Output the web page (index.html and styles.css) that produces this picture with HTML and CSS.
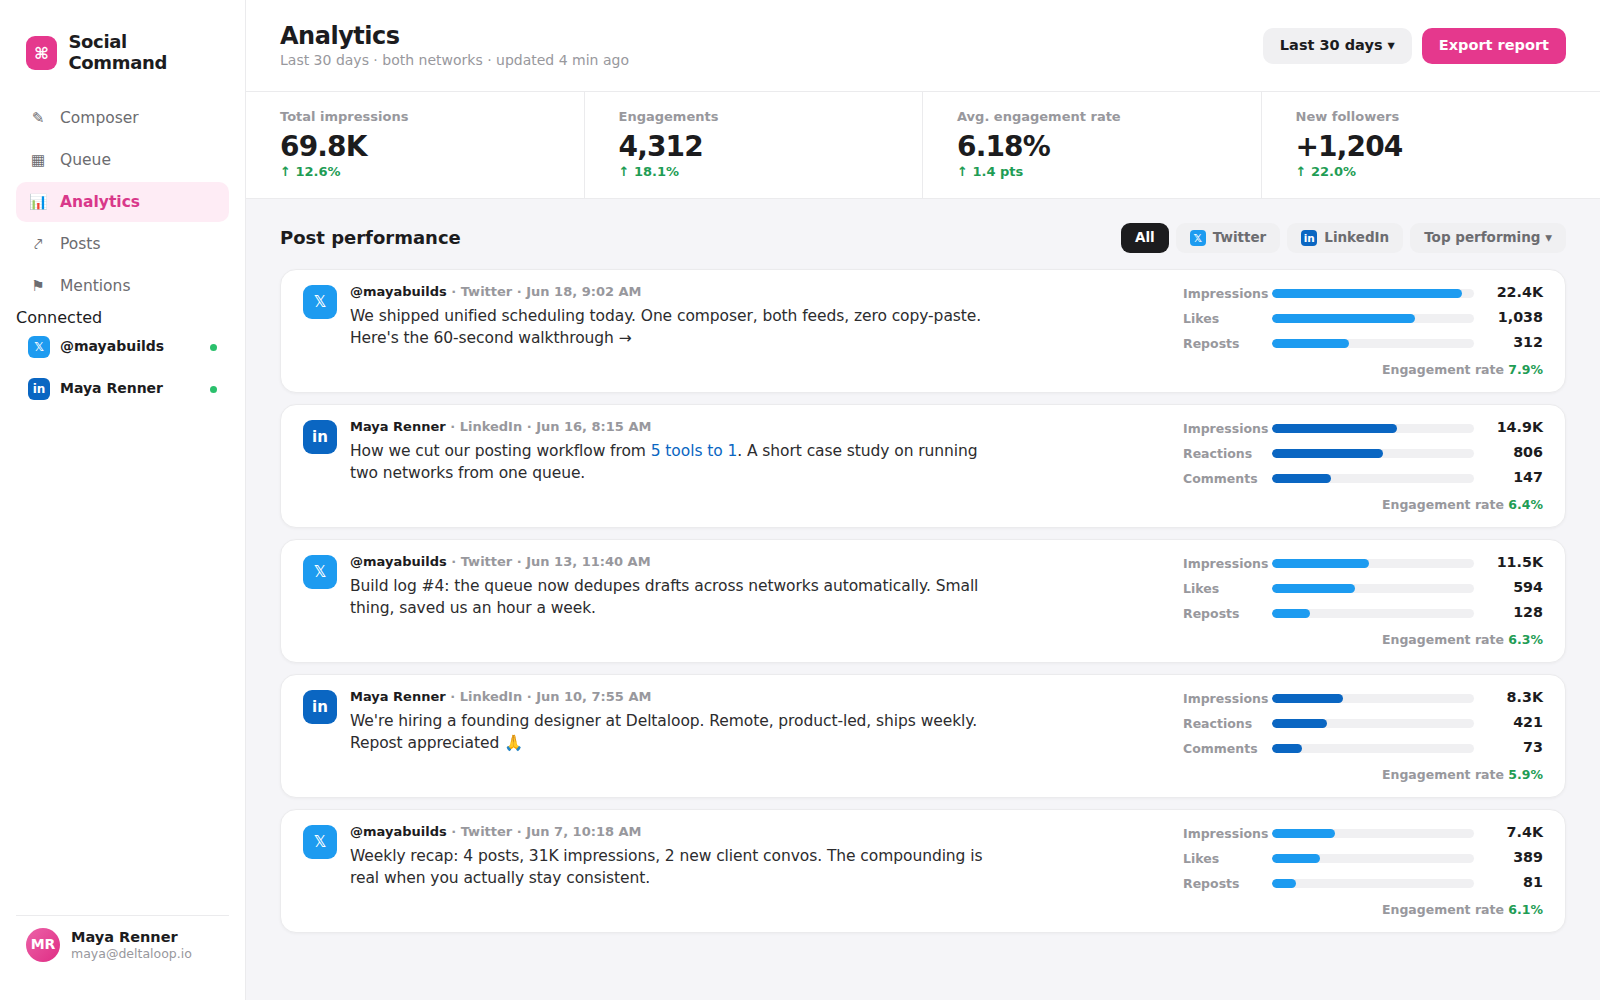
FILE: index.html
```html
<!DOCTYPE html>
<html lang="en">
<head>
<meta charset="utf-8">
<title>Social Command – Analytics</title>
<link rel="stylesheet" href="styles.css">
</head>
<body>
<div class="app">
  <aside class="sidebar">
    <div class="brand"><div class="brand-logo">⌘</div><div class="brand-name">Social Command</div></div>
    <nav class="nav">
      <a class="nav-item"><span class="nav-icon">✎</span>Composer</a>
      <a class="nav-item"><span class="nav-icon">▦</span>Queue</a>
      <a class="nav-item active"><span class="nav-icon">📊</span>Analytics</a>
      <a class="nav-item"><span class="nav-icon">⤤</span>Posts</a>
      <a class="nav-item"><span class="nav-icon">⚑</span>Mentions</a>
    </nav>
    <div class="connected">Connected</div>
    <div class="accounts">
      <div class="account"><span class="net tw">𝕏</span><span class="account-name">@mayabuilds</span><span class="dot"></span></div>
      <div class="account"><span class="net li">in</span><span class="account-name">Maya Renner</span><span class="dot"></span></div>
    </div>
    <div class="user">
      <div class="avatar">MR</div>
      <div><div class="user-name">Maya Renner</div><div class="user-mail">maya@deltaloop.io</div></div>
    </div>
  </aside>
  <main class="main">
    <header class="header">
      <div><h1>Analytics</h1><div class="sub">Last 30 days · both networks · updated 4 min ago</div></div>
      <div class="actions"><button class="btn">Last 30 days ▾</button><button class="btn primary">Export report</button></div>
    </header>
    <section class="kpis">
      <div class="kpi"><div class="kpi-label">Total impressions</div><div class="kpi-value">69.8K</div><div class="kpi-delta">↑ 12.6%</div></div>
      <div class="kpi"><div class="kpi-label">Engagements</div><div class="kpi-value">4,312</div><div class="kpi-delta">↑ 18.1%</div></div>
      <div class="kpi"><div class="kpi-label">Avg. engagement rate</div><div class="kpi-value">6.18%</div><div class="kpi-delta">↑ 1.4 pts</div></div>
      <div class="kpi"><div class="kpi-label">New followers</div><div class="kpi-value">+1,204</div><div class="kpi-delta">↑ 22.0%</div></div>
    </section>
    <section class="content">
      <div class="toolbar">
        <h2>Post performance</h2>
        <div class="chips">
          <button class="chip on"><span class="chip-label">All</span></button>
          <button class="chip"><span class="net tw">𝕏</span><span class="chip-label">Twitter</span></button>
          <button class="chip"><span class="net li">in</span><span class="chip-label">LinkedIn</span></button>
          <button class="chip"><span class="chip-label">Top performing ▾</span></button>
        </div>
      </div>
      <div class="posts">
        <article class="post">
          <span class="net tw">𝕏</span>
          <div class="body"><div class="meta"><b>@mayabuilds</b> · Twitter · Jun 18, 9:02 AM</div><p>We shipped unified scheduling today. One composer, both feeds, zero copy-paste. Here's the 60-second walkthrough →</p></div>
          <div class="stats tw-bars">
            <div class="stat"><span>Impressions</span><div class="track"><div class="fill" style="width:94%"></div></div><b>22.4K</b></div>
            <div class="stat"><span>Likes</span><div class="track"><div class="fill" style="width:71%"></div></div><b>1,038</b></div>
            <div class="stat"><span>Reposts</span><div class="track"><div class="fill" style="width:38%"></div></div><b>312</b></div>
            <div class="rate">Engagement rate <b>7.9%</b></div>
          </div>
        </article>
        <article class="post">
          <span class="net li">in</span>
          <div class="body"><div class="meta"><b>Maya Renner</b> · LinkedIn · Jun 16, 8:15 AM</div><p>How we cut our posting workflow from <a>5 tools to 1</a>. A short case study on running two networks from one queue.</p></div>
          <div class="stats li-bars">
            <div class="stat"><span>Impressions</span><div class="track"><div class="fill" style="width:62%"></div></div><b>14.9K</b></div>
            <div class="stat"><span>Reactions</span><div class="track"><div class="fill" style="width:55%"></div></div><b>806</b></div>
            <div class="stat"><span>Comments</span><div class="track"><div class="fill" style="width:29%"></div></div><b>147</b></div>
            <div class="rate">Engagement rate <b>6.4%</b></div>
          </div>
        </article>
        <article class="post">
          <span class="net tw">𝕏</span>
          <div class="body"><div class="meta"><b>@mayabuilds</b> · Twitter · Jun 13, 11:40 AM</div><p>Build log #4: the queue now dedupes drafts across networks automatically. Small thing, saved us an hour a week.</p></div>
          <div class="stats tw-bars">
            <div class="stat"><span>Impressions</span><div class="track"><div class="fill" style="width:48%"></div></div><b>11.5K</b></div>
            <div class="stat"><span>Likes</span><div class="track"><div class="fill" style="width:41%"></div></div><b>594</b></div>
            <div class="stat"><span>Reposts</span><div class="track"><div class="fill" style="width:19%"></div></div><b>128</b></div>
            <div class="rate">Engagement rate <b>6.3%</b></div>
          </div>
        </article>
        <article class="post">
          <span class="net li">in</span>
          <div class="body"><div class="meta"><b>Maya Renner</b> · LinkedIn · Jun 10, 7:55 AM</div><p>We're hiring a founding designer at Deltaloop. Remote, product-led, ships weekly. Repost appreciated 🙏</p></div>
          <div class="stats li-bars">
            <div class="stat"><span>Impressions</span><div class="track"><div class="fill" style="width:35%"></div></div><b>8.3K</b></div>
            <div class="stat"><span>Reactions</span><div class="track"><div class="fill" style="width:27%"></div></div><b>421</b></div>
            <div class="stat"><span>Comments</span><div class="track"><div class="fill" style="width:15%"></div></div><b>73</b></div>
            <div class="rate">Engagement rate <b>5.9%</b></div>
          </div>
        </article>
        <article class="post">
          <span class="net tw">𝕏</span>
          <div class="body"><div class="meta"><b>@mayabuilds</b> · Twitter · Jun 7, 10:18 AM</div><p>Weekly recap: 4 posts, 31K impressions, 2 new client convos. The compounding is real when you actually stay consistent.</p></div>
          <div class="stats tw-bars">
            <div class="stat"><span>Impressions</span><div class="track"><div class="fill" style="width:31%"></div></div><b>7.4K</b></div>
            <div class="stat"><span>Likes</span><div class="track"><div class="fill" style="width:24%"></div></div><b>389</b></div>
            <div class="stat"><span>Reposts</span><div class="track"><div class="fill" style="width:12%"></div></div><b>81</b></div>
            <div class="rate">Engagement rate <b>6.1%</b></div>
          </div>
        </article>
      </div>
    </section>
  </main>
</div>
</body>
</html>
```
FILE: styles.css
```css
* { box-sizing: border-box; }
body { margin: 0; font-family: "DejaVu Sans", sans-serif; font-size: 16px; color: #1c1c1e; background: #f5f5f8; }
h1, h2, p { margin: 0; }
button { font-family: inherit; border: 0; margin: 0; }
.app { display: flex; width: 1600px; height: 1000px; overflow: hidden; }

/* Sidebar */
.sidebar { width: 246px; flex: none; display: flex; flex-direction: column; background: #fff; border-right: 1px solid #ebebed; padding: 32px 16px 38px; }
.brand { display: flex; align-items: center; gap: 11.5px; height: 42px; padding: 0 10px; margin-bottom: 24px; }
.brand-logo { width: 31px; height: 34px; flex: none; border-radius: 9px; background: #e5388d; color: #fff; display: flex; align-items: center; justify-content: center; font-size: 16px; font-weight: 700; }
.brand-name { font-size: 18px; font-weight: 700; letter-spacing: -0.02em; line-height: 21px; padding-bottom: 2px; }
.nav { display: flex; flex-direction: column; gap: 2px; }
.nav-item { display: flex; align-items: center; gap: 12px; height: 40px; padding: 0 12px; border-radius: 10px; font-size: 15.5px; color: #6c6c70; }
.nav-item.active { background: #feecf5; color: #d9388a; font-weight: 700; }
.nav-icon { width: 20px; display: flex; justify-content: center; font-size: 15px; font-weight: 400; }
.connected { height: 21px; line-height: 23px; }
.accounts { display: flex; flex-direction: column; gap: 2px; }
.account { display: flex; align-items: center; gap: 10px; height: 40px; padding: 0 12px; font-size: 14px; font-weight: 700; }
.account-name { padding-bottom: 2px; }
.dot { width: 7px; height: 7px; border-radius: 50%; background: #2ac06c; margin-left: auto; }
.net { width: 22px; height: 22px; flex: none; border-radius: 6px; color: #fff; display: inline-flex; align-items: center; justify-content: center; font-size: 12px; font-weight: 700; padding-bottom: 1px; }
.net.tw { background: #1d9bf0; }
.net.li { background: #0a66c2; }
.user { margin-top: auto; display: flex; align-items: center; gap: 11px; border-top: 1px solid #ebebed; padding: 12px 10px 0; }
.avatar { width: 34px; height: 34px; border-radius: 50%; background: linear-gradient(135deg, #ec62a8, #df2d84); color: #fff; font-size: 14px; font-weight: 700; display: flex; align-items: center; justify-content: center; padding-bottom: 2px; }
.user-name { font-size: 14.5px; font-weight: 700; line-height: 17px; }
.user-mail { font-size: 12.5px; color: #98989d; line-height: 15px; }

/* Header */
.main { flex: 1; min-width: 0; display: flex; flex-direction: column; }
.header { height: 92px; display: flex; align-items: center; justify-content: space-between; background: #fff; border-bottom: 1px solid #ebebed; padding: 0 34px; }
h1 { font-size: 24px; letter-spacing: -0.02em; line-height: 28px; }
.sub { font-size: 14px; color: #98989d; line-height: 17px; margin-top: 2px; }
.actions { display: flex; gap: 10px; }
.btn { height: 36px; padding: 0 17px 2px; border-radius: 10px; background: #f0f0f2; color: #1c1c1e; font-size: 14.5px; font-weight: 700; }
.btn.primary { background: #e5388d; color: #fff; }

/* Metrics */
.kpis { display: grid; grid-template-columns: repeat(4, 1fr); height: 107px; background: #fff; border-bottom: 1px solid #ebebed; }
.kpi { padding: 17px 34px 0; border-right: 1px solid #ebebed; }
.kpi:last-child { border-right: 0; }
.kpi-label { font-size: 13px; font-weight: 700; color: #98989d; line-height: 15px; }
.kpi-value { font-size: 28px; font-weight: 700; letter-spacing: -0.03em; line-height: 33px; margin-top: 6px; }
.kpi-delta { font-size: 13px; font-weight: 700; color: #1f9d55; line-height: 15px; margin-top: 1px; }

/* Posts */
.content { padding: 24px 34px; }
.toolbar { display: flex; align-items: center; justify-content: space-between; height: 30px; margin-bottom: 16px; }
h2 { font-size: 18px; line-height: 21px; padding-bottom: 2px; }
.chips { display: flex; gap: 7px; }
.chip { display: flex; align-items: center; gap: 7px; height: 30px; padding: 0 14px; border-radius: 9px; background: #f0f0f2; color: #6c6c70; font-size: 13.5px; font-weight: 700; }
.chip-label { padding-bottom: 2px; }
.chip.on { background: #1c1c1e; color: #fff; }
.chip .net { width: 16px; height: 16px; border-radius: 4px; font-size: 10.5px; }
.posts { display: flex; flex-direction: column; gap: 11px; }
.post { display: flex; height: 124px; padding: 15px 22px; background: #fff; border: 1px solid #ebebed; border-radius: 16px; box-shadow: 0 1px 3px rgba(0, 0, 0, 0.04); }
.post > .net { width: 34px; height: 34px; border-radius: 9px; font-size: 15px; margin-right: 13px; padding-bottom: 0; }
.body { width: 640px; }
.meta { font-size: 13px; font-weight: 700; color: #98989d; line-height: 15px; height: 14px; margin-top: -1px; }
.meta b { color: #1c1c1e; }
.body p { font-size: 15.5px; letter-spacing: -0.005em; line-height: 22px; margin-top: 7px; color: #2c2c2e; }
.body a { color: #0a66c2; }
.stats { width: 360px; margin-left: auto; }
.stat { display: grid; grid-template-columns: 84px 202px 1fr; grid-template-rows: 17px; column-gap: 5px; align-items: center; height: 17px; margin-bottom: 8px; }
.stat span { font-size: 12.5px; font-weight: 700; color: #98989d; }
.stat b { font-size: 14.3px; line-height: 17px; text-align: right; padding-bottom: 2px; }
.track { height: 9px; border-radius: 5px; background: #f0f0f2; overflow: hidden; }
.fill { height: 100%; border-radius: 5px; }
.tw-bars .fill { background: #1d9bf0; }
.li-bars .fill { background: #0a66c2; }
.rate { font-size: 12.5px; font-weight: 700; color: #98989d; text-align: right; line-height: 15px; margin-top: 10px; }
.rate b { color: #1f9d55; }
```
